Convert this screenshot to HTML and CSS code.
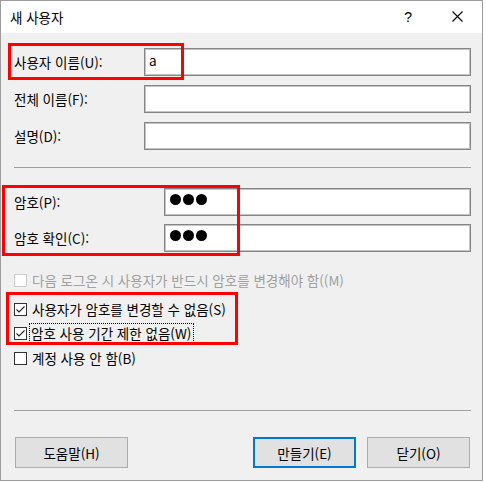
FILE: index.html
```html
<!DOCTYPE html>
<html lang="ko">
<head>
<meta charset="utf-8">
<title>새 사용자</title>
<link rel="stylesheet" href="styles.css">
</head>
<body>
<div class="window">
  <div class="titlebar">
    <span class="title">새 사용자</span>
    <span class="help-btn">?</span>
    <svg class="close-x" width="11" height="11" viewBox="0 0 11 11"><path d="M0.5 0.5 L10.5 10.5 M10.5 0.5 L0.5 10.5" stroke="#000" stroke-width="1.1" fill="none"/></svg>
  </div>
  <div class="body">
    <div class="row first">
      <label class="lbl">사용자 이름(U):</label>
      <div class="edit"><span class="val">a</span></div>
    </div>
    <div class="row">
      <label class="lbl">전체 이름(F):</label>
      <div class="edit"></div>
    </div>
    <div class="row">
      <label class="lbl">설명(D):</label>
      <div class="edit"></div>
    </div>
    <div class="sep sep1"></div>
    <div class="row pw first-pw">
      <label class="lbl wide">암호(P):</label>
      <div class="edit"><span class="dots"><i></i><i></i><i></i></span></div>
    </div>
    <div class="row pw second-pw">
      <label class="lbl wide">암호 확인(C):</label>
      <div class="edit"><span class="dots"><i></i><i></i><i></i></span></div>
    </div>
    <div class="cb cb1 disabled"><span class="box"></span><span class="txt">다음 로그온 시 사용자가 반드시 암호를 변경해야 함((M)</span></div>
    <div class="cb cb2"><span class="box"><svg width="11" height="11" viewBox="0 0 11 11"><path d="M1.5 5.5 L4 8 L9.5 2.5" stroke="#222" stroke-width="1.1" fill="none"/></svg></span><span class="txt">사용자가 암호를 변경할 수 없음(S)</span></div>
    <div class="cb cb3"><span class="box"><svg width="11" height="11" viewBox="0 0 11 11"><path d="M1.5 5.5 L4 8 L9.5 2.5" stroke="#222" stroke-width="1.1" fill="none"/></svg></span><span class="txt focus">암호 사용 기간 제한 없음(W)</span></div>
    <div class="cb cb4"><span class="box"></span><span class="txt">계정 사용 안 함(B)</span></div>
    <div class="sep sep2"></div>
    <div class="buttons">
      <button class="btn help">도움말(H)</button>
      <span class="spacer"></span>
      <button class="btn default">만들기(E)</button>
      <button class="btn close">닫기(O)</button>
    </div>
  </div>
  <div class="mark m1"></div>
  <div class="mark m2"></div>
  <div class="mark m3"></div>
</div>
</body>
</html>
```
FILE: styles.css
```css
html, body {
  margin: 0;
  padding: 0;
  background: #ffffff;
}
body {
  font-family: "Noto Sans CJK KR", "Noto Sans", sans-serif;
  font-size: 13.5px;
  color: #000;
}
.window {
  position: relative;
  width: 483px;
  height: 481px;
  box-sizing: border-box;
  border: 1px solid #9c9c9c;
  display: flex;
  flex-direction: column;
  background: #f0f0f0;
}
.titlebar {
  height: 32px;
  background: #ffffff;
  display: flex;
  align-items: center;
  padding-left: 9px;
  flex: none;
}
.title {
  line-height: 16px;
  margin-top: -1px;
}
.help-btn {
  margin-left: auto;
  font-family: "Liberation Sans", sans-serif;
  font-size: 14px;
  line-height: 16px;
  margin-top: -1px;
}
.close-x {
  margin-left: 40px;
  margin-right: 19px;
  margin-top: -1px;
}
.body {
  flex: 1;
  display: flex;
  flex-direction: column;
  padding: 15px 11px 0 13px;
}
.row {
  display: flex;
  align-items: center;
  height: 28px;
  margin-top: 9px;
}
.row.first { margin-top: 0; }
.row.first-pw { margin-top: 20px; }
.row.second-pw { margin-top: 8px; }
.lbl {
  width: 130px;
  flex: none;
  line-height: 16px;
}
.lbl.wide { width: 150px; }
.edit {
  flex: 1;
  height: 28px;
  box-sizing: border-box;
  background: #fff;
  border: 1px solid #858585;
  box-shadow: inset 0 0 0 1px #c4c4c4;
  display: flex;
  align-items: center;
  padding-left: 4px;
}
.val {
  line-height: 16px;
  margin-top: -4px;
}
.dots {
  display: flex;
  gap: 2px;
  margin-left: 1px;
  margin-top: -5px;
}
.dots i {
  display: block;
  width: 11px;
  height: 11px;
  border-radius: 50%;
  background: #000;
}
.sep {
  height: 0;
  border-top: 1px solid #a0a0a0;
}
.sep1 { margin-top: 17px; }
.sep2 { margin-top: 42px; }
.cb {
  display: flex;
  align-items: center;
  height: 20px;
}
.cb1 { margin-top: 18px; }
.cb2 { margin-top: 9px; }
.cb3 { margin-top: 4px; }
.cb4 { margin-top: 5px; }
.box {
  width: 13px;
  height: 13px;
  box-sizing: border-box;
  border: 1px solid #333;
  background: #fff;
  flex: none;
  display: flex;
  align-items: center;
  justify-content: center;
}
.disabled .box {
  border-color: #cccccc;
}
.disabled .txt {
  color: #a0a0a0;
}
.txt {
  margin-left: 4px;
  line-height: 16px;
  padding: 1px 1px;
}
.txt.focus {
  outline: 1px dotted #000;
  margin-left: 3px;
  padding: 1px 2px 1px 1px;
}
.buttons {
  display: flex;
  margin-top: 26px;
  padding: 0 1px;
}
.spacer { flex: 1; }
.btn {
  font-family: inherit;
  font-size: 13.5px;
  color: #000;
  height: 31px;
  background: #e1e1e1;
  border: 1px solid #adadad;
  padding: 0;
  line-height: 16px;
  border-radius: 0;
}
.btn.help { width: 113px; }
.btn.default {
  width: 103px;
  border: 2px solid #0078d7;
}
.btn.close {
  width: 103px;
  margin-left: 11px;
}
.mark {
  position: absolute;
  border: 3px solid #ff0000;
  box-sizing: border-box;
  pointer-events: none;
}
.m1 { left: 7px; top: 42px; width: 176px; height: 37px; }
.m2 { left: 1px; top: 184px; width: 238px; height: 71px; }
.m3 { left: 5px; top: 291px; width: 232px; height: 53px; }
```
